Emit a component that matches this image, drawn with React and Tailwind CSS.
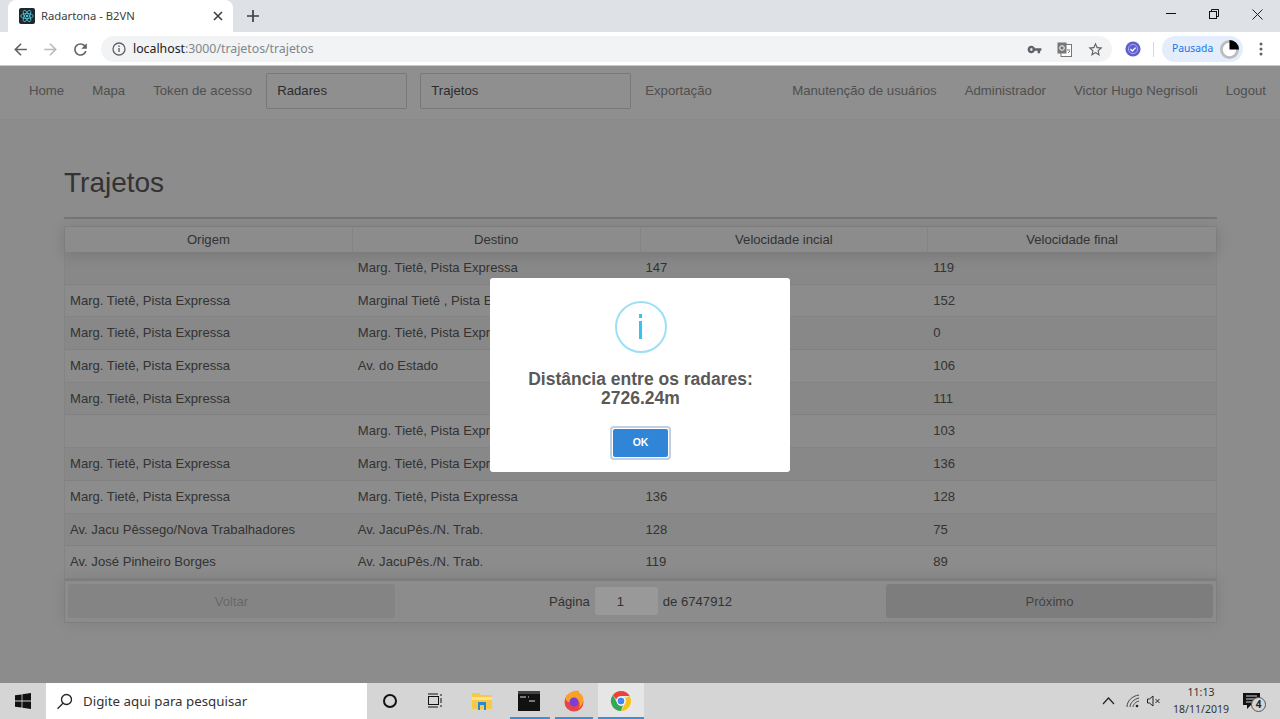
import React from "react";

const rows = [
  ["", "Marg. Tietê, Pista Expressa", "147", "119"],
  ["Marg. Tietê, Pista Expressa", "Marginal Tietê , Pista Expressa", "119", "152"],
  ["Marg. Tietê, Pista Expressa", "Marg. Tietê, Pista Expressa", "152", "0"],
  ["Marg. Tietê, Pista Expressa", "Av. do Estado", "0", "106"],
  ["Marg. Tietê, Pista Expressa", "", "106", "111"],
  ["", "Marg. Tietê, Pista Expressa", "111", "103"],
  ["Marg. Tietê, Pista Expressa", "Marg. Tietê, Pista Expressa", "103", "136"],
  ["Marg. Tietê, Pista Expressa", "Marg. Tietê, Pista Expressa", "136", "128"],
  ["Av. Jacu Pêssego/Nova Trabalhadores", "Av. JacuPês./N. Trab.", "128", "75"],
  ["Av. José Pinheiro Borges", "Av. JacuPês./N. Trab.", "119", "89"],
];

const Mat = ({ d, size = 18, fill = "#5f6368", className = "" }) => (
  <svg width={size} height={size} viewBox="0 0 24 24" className={className}><path d={d} fill={fill} /></svg>
);
const BACK = "M20 11H7.83l5.59-5.59L12 4l-8 8 8 8 1.41-1.41L7.83 13H20v-2z";
const RELOAD = "M17.65 6.35C16.2 4.9 14.21 4 12 4c-4.42 0-7.99 3.58-7.99 8s3.57 8 7.99 8c3.73 0 6.84-2.55 7.73-6h-2.08c-.82 2.33-3.04 4-5.65 4-3.31 0-6-2.69-6-6s2.69-6 6-6c1.66 0 3.14.69 4.22 1.78L13 11h7V4l-2.35 2.35z";
const KEY = "M12.65 10C11.83 7.67 9.61 6 7 6c-3.31 0-6 2.69-6 6s2.69 6 6 6c2.61 0 4.83-1.67 5.65-4H17v4h4v-4h2v-4H12.65zM7 14c-1.1 0-2-.9-2-2s.9-2 2-2 2 .9 2 2-.9 2-2 2z";
const STAR = "M22 9.24l-7.19-.62L12 2 9.19 8.63 2 9.24l5.46 4.73L5.82 21 12 17.27 18.18 21l-1.63-7.03L22 9.24zM12 15.4l-3.76 2.27 1-4.28-3.32-2.88 4.38-.38L12 6.1l1.71 4.04 4.38.38-3.32 2.88 1 4.28L12 15.4z";

function TabStrip() {
  return (
    <div className="h-[32px] bg-[#dee1e6] flex shrink-0 pl-[8px]">
      <div className="w-[225px] h-[32px] bg-white rounded-t-[8px] flex items-center pl-[11px] pr-[10px]">
        <svg width="16" height="16" viewBox="0 0 16 16" className="shrink-0">
          <rect width="16" height="16" rx="2" fill="#20272c" />
          <g fill="none" stroke="#4fc6dc" strokeWidth="0.8">
            <ellipse cx="8" cy="8" rx="6.3" ry="2.5" />
            <ellipse cx="8" cy="8" rx="6.3" ry="2.5" transform="rotate(60 8 8)" />
            <ellipse cx="8" cy="8" rx="6.3" ry="2.5" transform="rotate(120 8 8)" />
          </g>
          <circle cx="8" cy="8" r="1.3" fill="#4fc6dc" />
        </svg>
        <span className="ml-[6px] text-[11.25px] text-[#3c4043] font-['Noto_Sans',sans-serif] flex-1 whitespace-nowrap">Radartona - B2VN</span>
        <svg width="10" height="10" viewBox="0 0 10 10"><path d="M1 1l8 8M9 1l-8 8" stroke="#3c4043" strokeWidth="1.6" /></svg>
      </div>
      <svg width="12" height="12" viewBox="0 0 12 12" className="ml-[14px] mt-[10px]"><path d="M6 0v12M0 6h12" stroke="#3c4043" strokeWidth="1.7" /></svg>
      <div className="ml-auto flex items-start">
        <div className="w-[46px] h-[28px] flex items-center justify-center">
          <svg width="10" height="10" viewBox="0 0 10 10"><path d="M0 4.500h10" stroke="#111" strokeWidth="1" /></svg>
        </div>
        <div className="w-[40px] h-[28px] flex items-center justify-center">
          <svg width="10" height="10" viewBox="0 0 10 10" fill="none" stroke="#111"><rect x="0.500" y="2.500" width="7" height="7" /><path d="M2.500 2.500v-2h7v7h-2" /></svg>
        </div>
        <div className="w-[46px] h-[28px] flex items-center justify-center">
          <svg width="11" height="11" viewBox="0 0 11 11"><path d="M.5.5l10 10M10.500.5l-10 10" stroke="#222" strokeWidth="1" /></svg>
        </div>
      </div>
    </div>
  );
}

function Toolbar() {
  return (
    <div className="h-[34px] bg-white flex items-center shrink-0 border-b border-[#c9c9c9] pt-[1px] pl-[11px]">
      <Mat d={BACK} size={19} />
      <Mat d={BACK} size={19} fill="#b8babd" className="ml-[11px] rotate-180" />
      <Mat d={RELOAD} size={19} className="ml-[11px]" />
      <div className="ml-[11px] w-[1011px] h-[26px] bg-[#f1f3f4] rounded-full flex items-center pl-[11px] pr-[8px]">
        <svg width="14" height="14" viewBox="0 0 14 14" className="shrink-0">
          <circle cx="7" cy="7" r="6" fill="none" stroke="#5f6368" strokeWidth="1.3" />
          <path d="M7 6v4M7 3.600v1.400" stroke="#5f6368" strokeWidth="1.4" />
        </svg>
        <span className="ml-[7px] text-[12.3px] font-['Noto_Sans',sans-serif] whitespace-nowrap text-[#80868b]"><span className="text-[#202124]">localhost</span>:3000/trajetos/trajetos</span>
        <div className="ml-auto flex items-center gap-[15px]">
          <Mat d={KEY} size={15} />
          <svg width="15" height="15" viewBox="0 0 15 15">
            <rect x="4" y="2.500" width="10.500" height="12" fill="#fff" stroke="#777" />
            <rect x="0.500" y="0.500" width="9" height="11" fill="#777" />
            <circle cx="5" cy="6" r="2.300" fill="none" stroke="#fff" />
            <path d="M10 8h3M11 11l2-2" stroke="#777" />
          </svg>
          <Mat d={STAR} size={17} />
        </div>
      </div>
      <svg width="16" height="16" viewBox="0 0 16 16" className="ml-[13px]">
        <circle cx="8" cy="8" r="7.600" fill="#5f5fd0" />
        <circle cx="8" cy="8" r="4.600" fill="none" stroke="#a9a9ee" strokeWidth="1" />
        <path d="M5.400 8l2 2 3.200-3.400" fill="none" stroke="#fff" strokeWidth="1.300" />
      </svg>
      <div className="ml-[12px] w-px h-[15px] bg-[#d6d8da]" />
      <div className="ml-[8px] w-[81px] h-[26px] rounded-full bg-[#e4edfb] flex items-center pl-[10px]">
        <span className="text-[10.3px] text-[#1a73e8] font-['Noto_Sans',sans-serif]">Pausada</span>
        <svg width="19" height="19" viewBox="0 0 20 20" className="ml-[7px]">
          <circle cx="10" cy="10" r="8.500" fill="#fff" stroke="#bdbdbd" strokeWidth="3" />
          <path d="M10 10V0a10 10 0 0 1 10 10z" fill="#000" />
        </svg>
      </div>
      <svg width="4" height="14" viewBox="0 0 4 14" className="ml-[16px]"><g fill="#5f6368"><circle cx="2" cy="2" r="1.500" /><circle cx="2" cy="7" r="1.500" /><circle cx="2" cy="12" r="1.500" /></g></svg>
    </div>
  );
}

const NavLink = ({ children }) => <a className="px-[14px] text-[#858585] whitespace-nowrap">{children}</a>;
const NavBox = ({ children, w }) => <div className={`${w} h-[36px] border border-[#c8c8c8] rounded-[2px] flex items-center pl-[10px] text-[#4a4a4a]`}>{children}</div>;

function Nav() {
  return (
    <nav className="h-[54px] bg-[#eeeeee] border-b border-[#e6e6e6] flex items-center pl-[15px] pb-[3px] text-[13.2px] shrink-0">
      <NavLink>Home</NavLink>
      <NavLink>Mapa</NavLink>
      <NavLink>Token de acesso</NavLink>
      <NavBox w="w-[141px]">Radares</NavBox>
      <div className="w-[13px]" />
      <NavBox w="w-[211px]">Trajetos</NavBox>
      <NavLink>Exportação</NavLink>
      <div className="ml-auto flex">
        <NavLink>Manutenção de usuários</NavLink>
        <NavLink>Administrador</NavLink>
        <NavLink>Victor Hugo Negrisoli</NavLink>
        <NavLink>Logout</NavLink>
      </div>
    </nav>
  );
}

function Table() {
  return (
    <div className="border border-black/5 text-[13.1px]">
      <div className="relative grid grid-cols-4 h-[25px] shadow-[0_2px_15px_0_rgba(0,0,0,0.15)] text-[#555]">
        {["Origem", "Destino", "Velocidade incial", "Velocidade final"].map((h) => (
          <div key={h} className="flex items-center justify-center border-r border-black/5 last:border-r-0">{h}</div>
        ))}
      </div>
      {rows.map((r, i) => (
        <div key={i} className={`grid grid-cols-4 h-[32.7px] items-center border-b border-black/5 last:border-b-0 text-[#555] ${i % 2 === 0 ? "bg-black/[0.025]" : ""}`}>
          {r.map((c, j) => (
            <div key={j} className="px-[5px] whitespace-nowrap overflow-hidden">{c}</div>
          ))}
        </div>
      ))}
      <div className="h-[43px] flex items-center justify-between px-[3px] border-t-2 border-black/10 shadow-[0_0_15px_0_rgba(0,0,0,0.1)]">
        <div className="w-[327px] h-[34px] rounded-[3px] bg-black/5 flex items-center justify-center text-black/25">Voltar</div>
        <div className="flex items-center text-[#555]">
          <span>Página</span>
          <div className="ml-[5px] w-[63px] h-[28px] bg-white rounded-[3px] flex items-center pl-[22px]">1</div>
          <span className="ml-[5px]">de 6747912</span>
        </div>
        <div className="w-[327px] h-[34px] rounded-[3px] bg-black/10 flex items-center justify-center text-black/50">Próximo</div>
      </div>
    </div>
  );
}

function Modal() {
  return (
    <div className="absolute inset-0 bg-black/40 flex items-center justify-center">
      <div className="w-[300px] h-[194px] bg-white rounded-[3px] flex flex-col items-center pt-[23px] pl-[1px]">
        <div className="w-[52px] h-[52px] rounded-full border-[2px] border-[#9de0f6] flex items-center justify-center">
          <span className="w-[3px] h-[25px] flex flex-col items-center gap-[3px]">
            <span className="w-[3px] h-[4px] bg-[#35c3f5]" />
            <span className="w-[3px] h-[18px] bg-[#35c3f5]" />
          </span>
        </div>
        <div className="mt-[17px] text-[17.5px] leading-[19.5px] font-bold text-[#595959] text-center">Distância entre os radares:<br />2726.24m</div>
        <div className="mt-[17px] rounded-[4px] p-[1px] border-2 border-[#c0cfe4] bg-white">
          <button className="block w-[55px] h-[28px] bg-[#3085d6] rounded-[2px] text-white text-[10.5px] font-bold">OK</button>
        </div>
      </div>
    </div>
  );
}

function Taskbar() {
  return (
    <div className="h-[36px] bg-[#d5d5d5] flex items-center shrink-0 relative">
      <div className="w-[46px] flex justify-center">
        <svg width="16" height="16" viewBox="0 0 16 16" fill="#111"><path d="M0 2.300l6.600-.9v6.200H0zM7.400 1.300L16 0v7.600H7.400zM0 8.400h6.600v6.200L0 13.700zM7.400 8.400H16V16l-8.600-1.300z" /></svg>
      </div>
      <div className="w-[321px] h-[36px] bg-white flex items-center pl-[10px] text-[13.3px] text-[#333] font-['Noto_Sans',sans-serif]">
        <svg width="17" height="17" viewBox="0 0 17 17" fill="none" stroke="#222" strokeWidth="1.300"><circle cx="10.500" cy="6.500" r="5" /><path d="M7 10.300L1.500 15.700" /></svg>
        <span className="ml-[10px] mt-[2px] whitespace-nowrap">Digite aqui para pesquisar</span>
      </div>
      <div className="w-[46px] flex justify-center">
        <div className="w-[14px] h-[14px] rounded-full border-[2.5px] border-[#111]" />
      </div>
      <div className="w-[44px] flex justify-center">
        <svg width="16" height="16" viewBox="0 0 16 16" fill="none" stroke="#111"><rect x="1.500" y="3.500" width="10" height="8" /><path d="M1 1h10M1 14h10M14 1v2M14 5v5M14 12v2" /></svg>
      </div>
      <div className="w-[49px] h-full flex justify-center items-center">
        <svg width="20" height="18" viewBox="0 0 20 18"><path d="M0 1h7l2 2h11v14H0z" fill="#f7c948" /><path d="M0 5h20v3H0z" fill="#fde48a" /><path d="M6 10h8v8h-2v-5H8v5H6z" fill="#2b87d1" /></svg>
      </div>
      <div className="w-[45px] h-full flex justify-center items-center relative">
        <svg width="22" height="20" viewBox="0 0 22 20"><rect width="22" height="20" fill="#111" /><rect width="22" height="3" fill="#444" /><path d="M2 6h6M10 6h1M11 10h6" stroke="#ddd" /></svg>
        <span className="absolute bottom-0 left-[4px] right-[1px] h-[2px] bg-[#3d8fd8]" />
      </div>
      <div className="w-[45px] h-full flex justify-center items-center relative">
        <svg width="22" height="22" viewBox="0 0 22 22">
          <circle cx="11" cy="12" r="9.500" fill="#e8424d" />
          <path d="M3 7C6 1 13 0 16 1c-1 2 3 3 4 6 1 5-1 9-4 11 2-4 0-9-5-9C8 9 6 11 8 13c-4-1-6-3-5-6z" fill="#f9a02b" />
          <circle cx="11" cy="12" r="4.500" fill="#7b3fd1" />
        </svg>
        <span className="absolute bottom-0 left-[4px] right-[3px] h-[2px] bg-[#3d8fd8]" />
      </div>
      <div className="ml-[2px] w-[46px] h-full flex justify-center items-center relative bg-[#e6e6e6]">
        <svg width="22" height="22" viewBox="0 0 22 22">
          <path d="M11 1a10 10 0 0 1 8.660 5H11a5 5 0 0 0-4.800 3.600L2.900 5A10 10 0 0 1 11 1z" fill="#ea4335" />
          <path d="M19.660 6A10 10 0 0 1 11 21l4.300-7.500A5 5 0 0 0 15.300 8.500z" fill="#fbc116" />
          <path d="M11 21A10 10 0 0 1 2.900 5l4 7.500a5 5 0 0 0 6 3.100z" fill="#34a853" />
          <circle cx="11" cy="11" r="4" fill="#4285f4" stroke="#fff" />
        </svg>
        <span className="absolute bottom-0 left-0 right-0 h-[2px] bg-[#3d8fd8]" />
      </div>
      <div className="ml-auto flex items-center">
        <svg width="13" height="8" viewBox="0 0 13 8" fill="none" stroke="#222" strokeWidth="1.200"><path d="M1 7l5.500-6L12 7" /></svg>
        <svg width="14" height="14" viewBox="0 0 14 14" fill="none" stroke="#444" className="ml-[11px]"><path d="M1 13C1 7 6 2 13 1M4 13c0-4 4-8 9-9M7 13c0-2 2-5 6-6" /><circle cx="11" cy="12" r="1.300" fill="#222" stroke="none" /></svg>
        <svg width="14" height="12" viewBox="0 0 14 12" fill="none" stroke="#222" className="ml-[7px]"><path d="M.5 4h2L6 1v10L2.500 8h-2zM8.500 4l4 4M12.500 4l-4 4" /></svg>
        <div className="w-[62px] ml-[9px] flex flex-col items-center text-[10.5px] leading-[17.5px] text-[#333] font-['Noto_Sans',sans-serif]">
          <span>11:13</span>
          <span>18/11/2019</span>
        </div>
        <div className="w-[48px] relative h-[24px]">
          <svg width="17" height="16" viewBox="0 0 17 16" className="ml-[11px] mt-[4px]"><path d="M0 0h17v12h-9l-4 4v-4H0z" fill="#111" /><path d="M3 3h11M3 6h11M3 9h7" stroke="#d5d5d5" /></svg>
          <span className="absolute left-[19px] top-[8px] w-[15px] h-[15px] rounded-full bg-[#d5d5d5] border border-[#555] flex items-center justify-center text-[10px] font-bold text-[#222] font-['Noto_Sans',sans-serif]">4</span>
        </div>
      </div>
    </div>
  );
}

export default function App() {
  return (
    <div className="w-[1280px] h-[719px] overflow-hidden flex flex-col font-['Liberation_Sans',Arial,sans-serif]">
      <TabStrip />
      <Toolbar />
      <div className="relative flex-1 min-h-0 bg-[#e9e9e9] flex flex-col">
        <Nav />
        <main className="pl-[64px] pr-[63px] pt-[44px]">
          <h1 className="text-[28px] leading-[38px] text-[#555]">Trajetos</h1>
          <hr className="mt-[15px] mb-[7px] border-t-2 border-[#c4c4c4]" />
          <Table />
        </main>
        <Modal />
      </div>
      <Taskbar />
    </div>
  );
}
